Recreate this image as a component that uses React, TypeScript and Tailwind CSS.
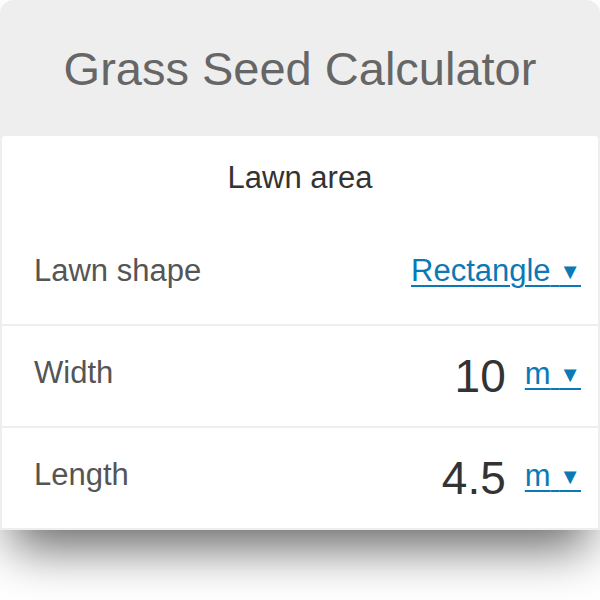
export default function App() {
  const font = { fontFamily: '"Liberation Sans", Arial, sans-serif' };

  return (
    <div className="w-[600px] h-[600px] bg-white overflow-hidden" style={font}>
      <div className="rounded-t-[14px] bg-[#eeeeee] px-[2px] pb-[2px] shadow-[0_30px_50px_-12px_rgba(0,0,0,0.6)]">
        <header className="h-[136px] flex items-center justify-center">
          <h1 className="text-[47px] text-[#666666] leading-none">Grass Seed Calculator</h1>
        </header>

        <div className="flex flex-col gap-[2px]">
          <div className="bg-white rounded-t-[3px]">
            <div className="h-[89px] flex items-center justify-center pb-[6px]">
              <h2 className="text-[31px] text-[#333333] leading-none">Lawn area</h2>
            </div>
            <Row label="Lawn shape" height="h-[99px]">
              <Select text="Rectangle" />
            </Row>
          </div>

          <Row label="Width">
            <Value value="10" />
          </Row>

          <Row label="Length">
            <Value value="4.5" />
          </Row>
        </div>
      </div>
    </div>
  );
}

function Row({
  label,
  children,
  height = "h-[100px]",
}: {
  label: string;
  children: React.ReactNode;
  height?: string;
}) {
  return (
    <div className={`bg-white ${height} flex items-center justify-between pl-[32px] pr-[17px]`}>
      <span className="text-[31px] text-[#555555] leading-none mb-[8px]">{label}</span>
      {children}
    </div>
  );
}

function Select({ text, lift = "mb-[8px]" }: { text: string; lift?: string }) {
  return (
    <span className={`text-[31px] text-[#0a79b5] leading-none ${lift} underline underline-offset-[4px] decoration-[2px] whitespace-pre`}>
      {text}{" "}
      <span className="text-[22px] align-[2px]">▼</span>
    </span>
  );
}

function Value({ value }: { value: string }) {
  return (
    <div className="flex items-center">
      <span className="text-[46px] text-[#333333] leading-none mr-[19px]">{value}</span>
      <Select text="m" lift="mb-[5px]" />
    </div>
  );
}
